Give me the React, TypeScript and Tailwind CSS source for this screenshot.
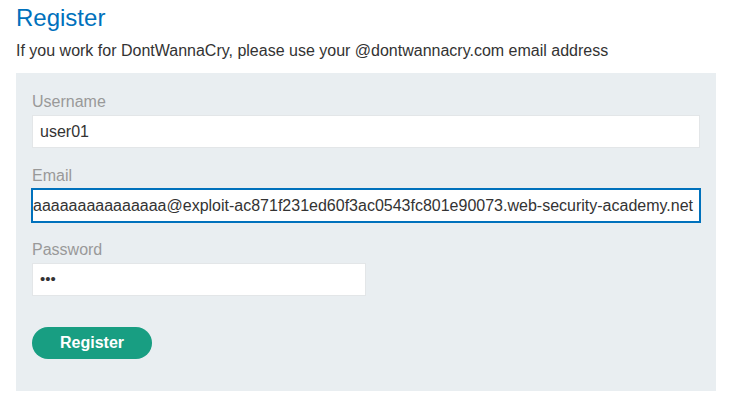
import React from 'react';

const EMAIL =
  'aaaaaaaaaaaaaaaaaaaaaaaaaaaaaaaaaaaaaaaaaaaaaaaaaaaaaaaaaaaaaaaaaaaaaaaaaaaaaaaaaa@exploit-ac871f231ed60f3ac0543fc801e90073.web-security-academy.net';

interface FieldProps {
  label: string;
  children: React.ReactNode;
}

const Field: React.FC<FieldProps> = ({ label, children }) => (
  <div className="flex flex-col">
    <label className="text-base leading-6 text-[#999999] mb-px">{label}</label>
    {children}
  </div>
);

export default function App() {
  return (
    <div className="min-h-[404px] bg-white px-4 font-['Liberation_Sans',Arial,sans-serif] text-[#333333]">
      <h1 className="pt-1 text-2xl leading-7 text-[#0071bc]">Register</h1>
      <p className="mt-[7px] text-base leading-6">
        If you work for DontWannaCry, please use your @dontwannacry.com email address
      </p>

      {/* Form panel */}
      <div className="mt-[10px] w-[700px] bg-[#e9eef1] px-4 pt-[17px] pb-8">
        <div className="flex flex-col gap-4">
          <Field label="Username">
            <div className="h-[33px] w-full border border-[#e3e6e8] bg-white px-[7px] flex items-center text-base">
              user01
            </div>
          </Field>

          <Field label="Email">
            <div className="h-[33px] w-full border border-[#0071bc] outline outline-1 outline-[#0071bc] bg-white pl-px pr-[6px] flex items-center justify-end overflow-hidden whitespace-nowrap text-base">
              {EMAIL}
            </div>
          </Field>

          <Field label="Password">
            <div className="h-[33px] w-[334px] border border-[#e3e6e8] bg-white px-[7px] flex items-center text-[15px] text-[#333]">
              •••
            </div>
          </Field>
        </div>

        <button className="mt-[31px] h-8 w-[120px] rounded-full bg-[#189e82] text-base font-bold text-white">
          Register
        </button>
      </div>
    </div>
  );
}
